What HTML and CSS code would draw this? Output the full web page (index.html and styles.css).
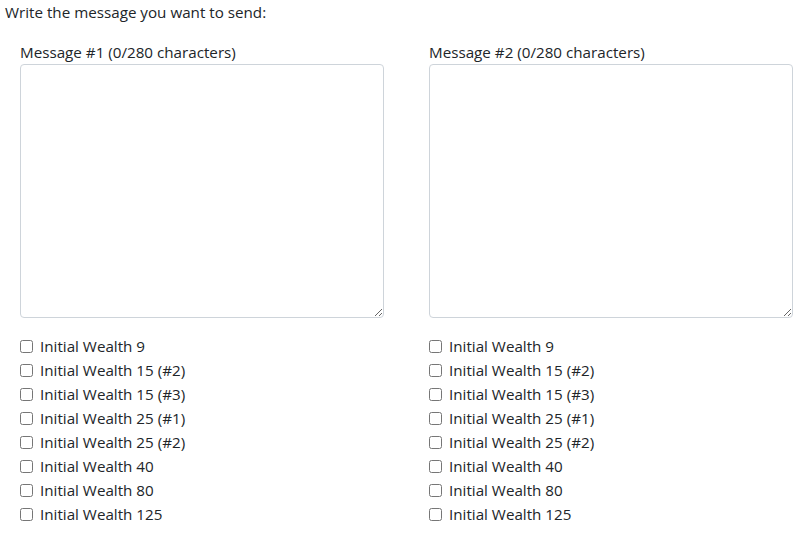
FILE: index.html
```html
<!DOCTYPE html>
<html>
<head>
<meta charset="utf-8">
<link rel="stylesheet" href="styles.css">
</head>
<body>
<div class="page">
  <p class="intro">Write the message you want to send:</p>
  <div class="columns">
    <div class="col">
      <label class="msg-label">Message #1 (0/280 characters)</label>
      <textarea class="msg"></textarea>
      <ul class="checks">
        <li><label><input type="checkbox"><span>Initial Wealth 9</span></label></li>
        <li><label><input type="checkbox"><span>Initial Wealth 15 (#2)</span></label></li>
        <li><label><input type="checkbox"><span>Initial Wealth 15 (#3)</span></label></li>
        <li><label><input type="checkbox"><span>Initial Wealth 25 (#1)</span></label></li>
        <li><label><input type="checkbox"><span>Initial Wealth 25 (#2)</span></label></li>
        <li><label><input type="checkbox"><span>Initial Wealth 40</span></label></li>
        <li><label><input type="checkbox"><span>Initial Wealth 80</span></label></li>
        <li><label><input type="checkbox"><span>Initial Wealth 125</span></label></li>
      </ul>
    </div>
    <div class="col">
      <label class="msg-label">Message #2 (0/280 characters)</label>
      <textarea class="msg"></textarea>
      <ul class="checks">
        <li><label><input type="checkbox"><span>Initial Wealth 9</span></label></li>
        <li><label><input type="checkbox"><span>Initial Wealth 15 (#2)</span></label></li>
        <li><label><input type="checkbox"><span>Initial Wealth 15 (#3)</span></label></li>
        <li><label><input type="checkbox"><span>Initial Wealth 25 (#1)</span></label></li>
        <li><label><input type="checkbox"><span>Initial Wealth 25 (#2)</span></label></li>
        <li><label><input type="checkbox"><span>Initial Wealth 40</span></label></li>
        <li><label><input type="checkbox"><span>Initial Wealth 80</span></label></li>
        <li><label><input type="checkbox"><span>Initial Wealth 125</span></label></li>
      </ul>
    </div>
  </div>
</div>
</body>
</html>
```

FILE: styles.css
```css
html, body {
  margin: 0;
  padding: 0;
  background: #fff;
}
body {
  font-family: "Open Sans", "Noto Sans", sans-serif;
  font-size: 15.2px;
  line-height: 24px;
  color: #212529;
}
.page {
  padding: 0 0 0 5px;
}
.intro {
  margin: 0 0 16px 0;
}
.columns {
  display: grid;
  grid-template-columns: 364px 364px;
  column-gap: 45px;
  padding-left: 15px;
}
.col {
  display: flex;
  flex-direction: column;
}
.msg-label {
  display: block;
}
.msg {
  display: block;
  box-sizing: border-box;
  width: 364px;
  height: 254px;
  margin: 0 0 16px 0;
  border: 1px solid #ced4da;
  border-radius: 4px;
  padding: 6px 12px;
  font: inherit;
  resize: vertical;
}
.checks {
  list-style: none;
  margin: 0;
  padding: 0;
}
.checks label {
  display: flex;
  align-items: center;
}
.checks input {
  width: 13px;
  height: 13px;
  margin: 0 7px 0 0;
}
```
